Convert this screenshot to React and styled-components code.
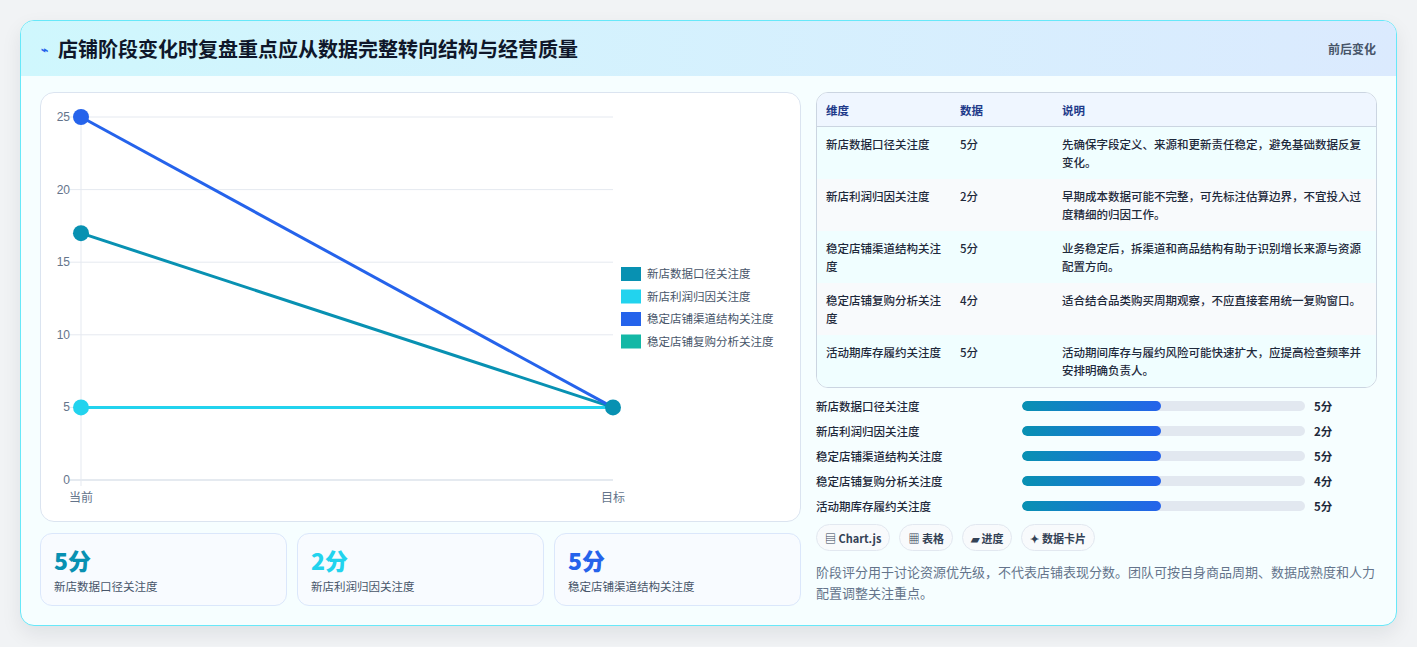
import React from "react";
import styled, { createGlobalStyle } from "styled-components";

const Global = createGlobalStyle`
  body { margin: 0; background: #f1f3f5; font-family: "Noto Sans CJK SC", "Noto Sans", sans-serif; }
`;

const Page = styled.div`padding: 20px 20px 20px 20px;`;
const Card = styled.div`
  border: 1px solid #67e8f9; border-radius: 14px; background: #f6feff; overflow: hidden;
  box-shadow: 0 8px 20px rgba(15,23,42,0.08); height: 606px; box-sizing: border-box;
`;
const Header = styled.div`
  height: 55px; display: flex; align-items: center; justify-content: space-between;
  padding: 0 20px 0 20px; background: linear-gradient(90deg, #cff7fd, #dbeafe);
`;
const Title = styled.div`
  display: flex; align-items: center; gap: 10px; font-size: 20px; font-weight: 700; color: #0f172a;
`;
const Spark = styled.span`color: #2563eb; font-size: 12px;`;
const Tag = styled.div`font-size: 12px; font-weight: 700; color: #475569;`;
const Body = styled.div`display: grid; grid-template-columns: 761px 561px; gap: 15px; padding: 16px 19px;`;
const Left = styled.div`display: flex; flex-direction: column; gap: 11px;`;
const ChartBox = styled.div`
  height: 430px; border: 1px solid #dbe4f0; border-radius: 14px; background: #fff; box-sizing: border-box; overflow: hidden;
`;
const Stats = styled.div`display: grid; grid-template-columns: repeat(3, 1fr); gap: 10px;`;
const Stat = styled.div`
  height: 73px; box-sizing: border-box; border: 1px solid #dbe7fb; border-radius: 12px; background: #f8fbff; padding: 12px 13px;
`;
const StatVal = styled.div`font-size: 23px; font-weight: 800; color: ${p => p.c}; line-height: 28px;`;
const StatLabel = styled.div`font-size: 11.5px; color: #475569; margin-top: 4px;`;
const Right = styled.div`display: flex; flex-direction: column;`;
const TableWrap = styled.div`border: 1px solid #cbd5e1; border-radius: 12px; overflow: hidden; background: #fff;`;
const Table = styled.table`width: 100%; border-collapse: collapse; font-size: 11.5px; color: #1e293b; table-layout: fixed;`;
const Th = styled.th`
  text-align: left; font-weight: 700; color: #1e3a8a; background: #eff6ff; height: 33px; padding: 0 9px;
  border-bottom: 1px solid #cbd5e1; width: ${p => p.w || "auto"};
`;
const Tr = styled.tr`background: ${p => (p.alt ? "#f8fafc" : "#f0feff")}; & + & td { border-top: 1px solid #dbe2ea; }`;
const Td = styled.td`padding: 8px 9px 8px; vertical-align: top; line-height: 18px; height: 36px; font-weight: 500;`;
const Bars = styled.div`display: flex; flex-direction: column; gap: 6px; margin-top: 8px;`;
const BarRow = styled.div`display: grid; grid-template-columns: 206px 283px 1fr; align-items: center; height: 19px; font-size: 11.5px; color: #1e293b; font-weight: 500;`;
const Track = styled.div`height: 10px; border-radius: 5px; background: #e2e8f0; overflow: hidden;`;
const Fill = styled.div`height: 100%; border-radius: 5px; background: linear-gradient(90deg, #0891b2, #2563eb);`;
const Val = styled.div`padding-left: 9px; font-weight: 700;`;
const Chips = styled.div`display: flex; gap: 9px; margin-top: 9px;`;
const Chip = styled.div`
  height: 27px; box-sizing: border-box; border: 1px solid #e2e8f0; border-radius: 14px; background: #f8fafc;
  padding: 0 8px; display: flex; align-items: center; gap: 3px; font-size: 11px; font-weight: 700; color: #334155;
`;
const Note = styled.p`margin: 10px 0 0; font-size: 13px; line-height: 21px; color: #64748b;`;

const rows = [
  ["新店数据口径关注度", "5分", "先确保字段定义、来源和更新责任稳定，避免基础数据反复变化。"],
  ["新店利润归因关注度", "2分", "早期成本数据可能不完整，可先标注估算边界，不宜投入过度精细的归因工作。"],
  ["稳定店铺渠道结构关注度", "5分", "业务稳定后，拆渠道和商品结构有助于识别增长来源与资源配置方向。"],
  ["稳定店铺复购分析关注度", "4分", "适合结合品类购买周期观察，不应直接套用统一复购窗口。"],
  ["活动期库存履约关注度", "5分", "活动期间库存与履约风险可能快速扩大，应提高检查频率并安排明确负责人。"],
];

const Chart = () => {
  const Y = v => 24 + (25 - v) * 14.52;
  const x0 = 40, x1 = 572;
  const legend = [["#0891b2", "新店数据口径关注度"], ["#22d3ee", "新店利润归因关注度"], ["#2563eb", "稳定店铺渠道结构关注度"], ["#14b8a6", "稳定店铺复购分析关注度"]];
  return (
    <svg width="760" height="430" style={{ display: "block" }}>
      {[0, 5, 10, 15, 20, 25].map(v => (
        <g key={v}>
          <line x1={28} x2={572} y1={Y(v)} y2={Y(v)} stroke={v === 0 ? "#cbd5e1" : "#e5e9f0"} />
          <text x={29} y={Y(v) + 4} fontSize="12" fill="#64748b" textAnchor="end" fontFamily="Liberation Sans, sans-serif">{v}</text>
        </g>
      ))}
      <line x1={x0} x2={x0} y1={Y(25)} y2={Y(0) + 6} stroke="#e5e9f0" />
      <text x={x0} y={409} fontSize="12" fill="#64748b" textAnchor="middle">当前</text>
      <text x={x1} y={409} fontSize="12" fill="#64748b" textAnchor="middle">目标</text>
      <line x1={x0} y1={Y(5)} x2={x1} y2={Y(5)} stroke="#22d3ee" strokeWidth="3" />
      <line x1={x0} y1={Y(17)} x2={x1} y2={Y(5)} stroke="#0891b2" strokeWidth="3" />
      <line x1={x0} y1={Y(25)} x2={x1} y2={Y(5)} stroke="#2563eb" strokeWidth="3" />
      <circle cx={x0} cy={Y(5)} r="8" fill="#22d3ee" />
      <circle cx={x0} cy={Y(17)} r="8" fill="#0891b2" />
      <circle cx={x0} cy={Y(25)} r="8" fill="#2563eb" />
      <circle cx={x1} cy={Y(5)} r="8" fill="#0891b2" />
      {legend.map(([c, t], i) => (
        <g key={t}>
          <rect x={580} y={174 + i * 22.5} width={20} height={14} fill={c} />
          <text x={606} y={185 + i * 22.5} fontSize="11.5" fill="#475569">{t}</text>
        </g>
      ))}
    </svg>
  );
};

export default function App() {
  return (
    <Page>
      <Global />
      <Card>
        <Header>
          <Title><Spark>⌁</Spark>店铺阶段变化时复盘重点应从数据完整转向结构与经营质量</Title>
          <Tag>前后变化</Tag>
        </Header>
        <Body>
          <Left>
            <ChartBox><Chart /></ChartBox>
            <Stats>
              <Stat><StatVal c="#0891b2">5分</StatVal><StatLabel>新店数据口径关注度</StatLabel></Stat>
              <Stat><StatVal c="#22d3ee">2分</StatVal><StatLabel>新店利润归因关注度</StatLabel></Stat>
              <Stat><StatVal c="#2563eb">5分</StatVal><StatLabel>稳定店铺渠道结构关注度</StatLabel></Stat>
            </Stats>
          </Left>
          <Right>
            <TableWrap>
              <Table>
                <thead><tr><Th w="116px">维度</Th><Th w="84px">数据</Th><Th>说明</Th></tr></thead>
                <tbody>
                  {rows.map((r, i) => (
                    <Tr key={i} alt={i % 2 === 1}><Td>{r[0]}</Td><Td>{r[1]}</Td><Td>{r[2]}</Td></Tr>
                  ))}
                </tbody>
              </Table>
            </TableWrap>
            <Bars>
              {rows.map(r => (
                <BarRow key={r[0]}>
                  <span>{r[0]}</span>
                  <Track><Fill style={{ width: "49%" }} /></Track>
                  <Val>{r[1]}</Val>
                </BarRow>
              ))}
            </Bars>
            <Chips>
              <Chip>▤ Chart.js</Chip>
              <Chip>▦ 表格</Chip>
              <Chip>▰ 进度</Chip>
              <Chip>✦ 数据卡片</Chip>
            </Chips>
            <Note>阶段评分用于讨论资源优先级，不代表店铺表现分数。团队可按自身商品周期、数据成熟度和人力配置调整关注重点。</Note>
          </Right>
        </Body>
      </Card>
    </Page>
  );
}
